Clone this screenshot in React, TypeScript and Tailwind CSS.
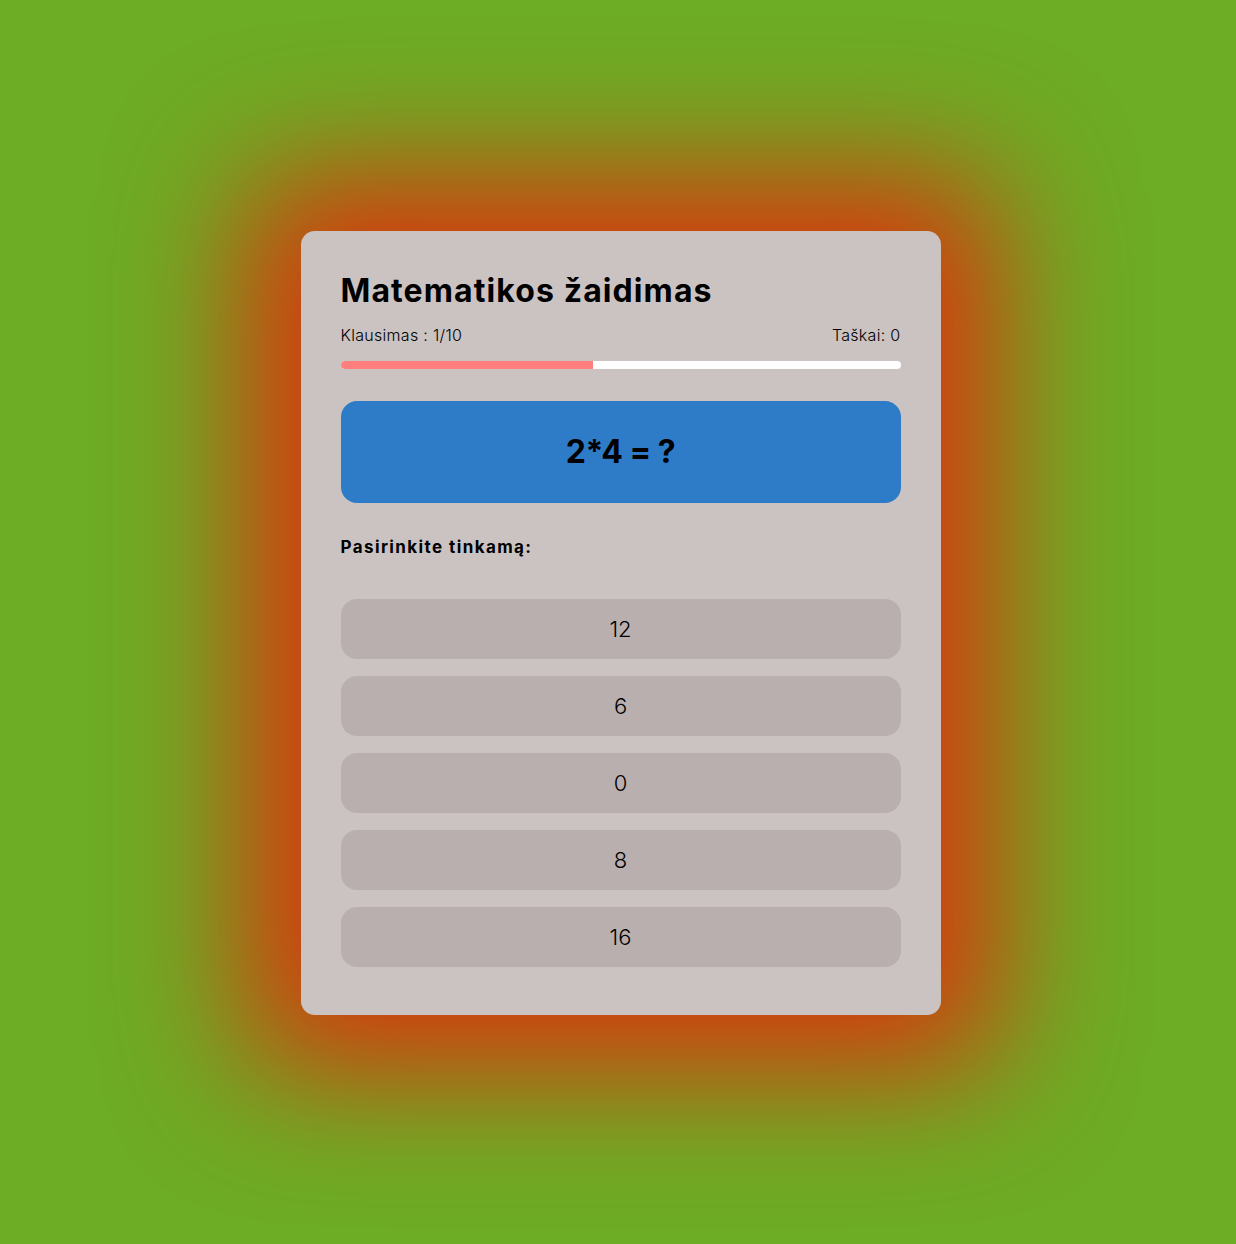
import React from 'react';

const answers = [12, 6, 0, 8, 16];

const App: React.FC = () => {
  const progress = 45;

  return (
    <div className="min-h-screen w-full bg-[#6dac25] flex items-center justify-center font-['Inter',sans-serif] text-black">
      <div className="ml-[5px] mt-[2px] w-[640px] rounded-[14px] bg-[#cbc3c2] px-10 pt-10 pb-12 shadow-[0_0_130px_58px_#d8380e]">
        <h1 className="text-[32px] leading-[40px] font-bold tracking-[1.1px]">Matematikos žaidimas</h1>

        <div className="mt-[14px] flex items-center justify-between text-[16px] leading-5 font-light tracking-[0.3px]">
          <span>Klausimas : 1/10</span>
          <span>Taškai: 0</span>
        </div>

        <div className="mt-4 h-2 w-full rounded-full bg-white overflow-hidden">
          <div className="h-full bg-[#ff7f7f]" style={{ width: `${progress}%` }} />
        </div>

        <div className="mt-[32px] h-[102px] rounded-2xl bg-[#2e7bc8] flex items-center justify-center">
          <span className="text-[32px] font-bold tracking-[-0.5px]">2*4 = ?</span>
        </div>

        <p className="mt-[32px] text-[17px] leading-6 font-bold tracking-[1.4px]">Pasirinkite tinkamą:</p>

        <div className="mt-[40px] flex flex-col gap-[17px]">
          {answers.map((a) => (
            <button
              key={a}
              className="h-[60px] w-full rounded-2xl bg-[#b8afae] text-[22px] font-light flex items-center justify-center"
            >
              {a}
            </button>
          ))}
        </div>
      </div>
    </div>
  );
};

export default App;
